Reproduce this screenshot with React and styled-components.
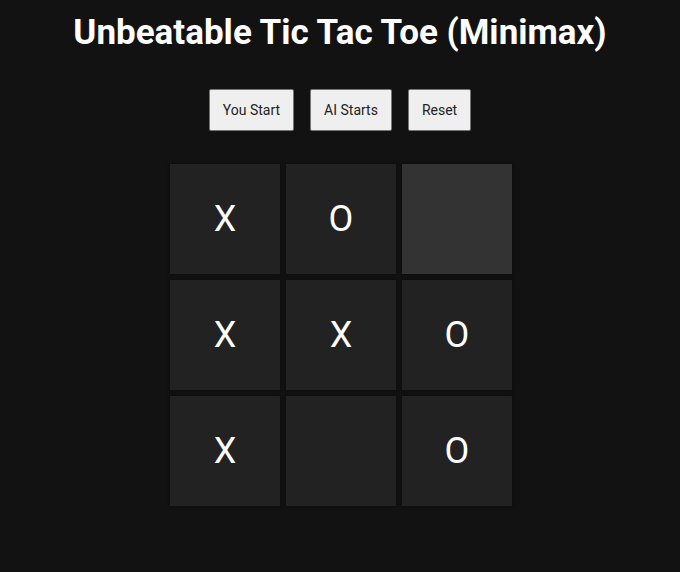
import React, { useState } from 'react';
import styled, { createGlobalStyle } from 'styled-components';

const GlobalStyle = createGlobalStyle`
  html, body {
    margin: 0;
    padding: 0;
    background: #121212;
  }
  body {
    font-family: Roboto, "Liberation Sans", sans-serif;
    color: #ffffff;
  }
`;

const Page = styled.div`
  min-height: 572px;
  display: flex;
  flex-direction: column;
  align-items: center;
  padding-top: 12px;
  box-sizing: border-box;
`;

const Title = styled.h1`
  margin: 0;
  font-size: 35px;
  font-weight: 700;
  line-height: 41px;
  color: #ffffff;
`;

const Controls = styled.div`
  display: flex;
  gap: 16px;
  margin-top: 36px;
`;

const Button = styled.button`
  font-family: Roboto, "Liberation Sans", sans-serif;
  font-size: 14px;
  line-height: 16px;
  padding: 12px 13px;
  background: #efefef;
  color: #222;
  border: 1px solid #767676;
  border-radius: 2px;
  cursor: pointer;
`;

const Board = styled.div`
  display: grid;
  grid-template-columns: repeat(3, 110px);
  grid-auto-rows: 110px;
  gap: 6px;
  margin-top: 33px;
  margin-left: 2px;
`;

const Cell = styled.div`
  display: flex;
  align-items: center;
  justify-content: center;
  background: ${(p) => (p.$active ? '#333333' : '#222222')};
  box-shadow: 0 0 3px rgba(0, 0, 0, 0.5);
  font-size: 36px;
  color: #ffffff;
  cursor: pointer;
`;

const START = ['X', 'O', '', 'X', 'X', 'O', 'X', '', 'O'];

export default function App() {
  const [board, setBoard] = useState(START);

  return (
    <>
      <GlobalStyle />
      <Page>
        <Title>Unbeatable Tic Tac Toe (Minimax)</Title>
        <Controls>
          <Button onClick={() => setBoard(Array(9).fill(''))}>You Start</Button>
          <Button onClick={() => setBoard(['', '', '', '', 'O', '', '', '', ''])}>AI Starts</Button>
          <Button onClick={() => setBoard(Array(9).fill(''))}>Reset</Button>
        </Controls>
        <Board>
          {board.map((v, i) => (
            <Cell key={i} $active={i === 2}>
              {v}
            </Cell>
          ))}
        </Board>
      </Page>
    </>
  );
}
